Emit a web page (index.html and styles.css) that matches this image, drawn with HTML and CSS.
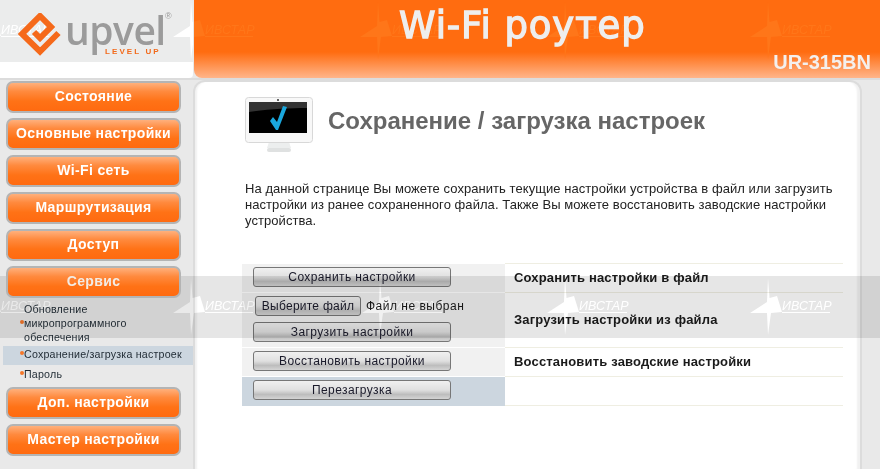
FILE: index.html
```html
<!DOCTYPE html>
<html lang="ru">
<head>
<meta charset="utf-8">
<title>Сохранение / загрузка настроек</title>
<link rel="stylesheet" href="styles.css">
</head>
<body>
<svg width="0" height="0" class="defs">
  <defs>
    <g id="wm">
      <polygon points="0,0 1.5,20 9,18 14,34 3,35 0,57 -1,35 -18,35 -1,24"/>
      <rect x="14" y="34" width="48" height="1"/>
      <text x="14" y="32" class="wm-text">ИВСТАР</text>
    </g>
  </defs>
</svg>
<div class="page">
  <header class="top">
    <div class="logo">
      <svg class="wm wm-white" width="193" height="62"><use href="#wm" x="-13" y="2"/><use href="#wm" x="191" y="2"/></svg>
      <svg class="mark" width="46" height="46" viewBox="0 0 46 46">
        <polyline points="40.5,20 22,38.5 4,21 22,3 33,14 22,25 16,19" fill="none" stroke="#f5691a" stroke-width="6"/>
      </svg>
      <div class="word">upvel</div>
      <div class="reg">®</div>
      <div class="tag">LEVEL UP</div>
    </div>
    <div class="band-top">
      <svg class="wm wm-orange" width="686" height="78"><use href="#wm" x="-3" y="2"/><use href="#wm" x="184" y="2"/><use href="#wm" x="371" y="2"/><use href="#wm" x="574" y="2"/></svg>
      <h1 class="product">Wi-Fi роутер</h1>
      <div class="model">UR-315BN</div>
    </div>
  </header>
  <div class="layout">
    <nav class="side">
      <a class="nav-btn">Состояние</a>
      <a class="nav-btn">Основные настройки</a>
      <a class="nav-btn">Wi-Fi сеть</a>
      <a class="nav-btn">Маршрутизация</a>
      <a class="nav-btn">Доступ</a>
      <a class="nav-btn nav-on">Сервис</a>
      <ul class="sub">
        <li class="sub-item sub-multi">Обновление микропрограммного обеспечения</li>
        <li class="sub-item sub-on">Сохранение/загрузка настроек</li>
        <li class="sub-item sub-last">Пароль</li>
      </ul>
      <a class="nav-btn">Доп. настройки</a>
      <a class="nav-btn">Мастер настройки</a>
    </nav>
    <main class="panel">
      <div class="head">
        <svg class="monitor" width="68" height="56" viewBox="0 0 68 56">
          <path d="M24 45h20l2 6H22z" fill="#eceeee"/>
          <rect x="22" y="51" width="24" height="4" rx="2" fill="#dfe1e1"/>
          <rect x="0.5" y="0.5" width="67" height="45" rx="3" fill="#f8f8f8" stroke="#d8d8d8"/>
          <rect x="4" y="5" width="58" height="31" fill="#000"/>
          <path d="M4 5h58v6c-18 0-40 1-58 4z" fill="#333"/>
          <circle cx="33" cy="3" r="1" fill="#333"/>
          <polygon points="25,24 28,20 32,25 38,9 42,10 33,33 31,33" fill="#1aa7dd"/>
        </svg>
        <h2 class="title">Сохранение / загрузка настроек</h2>
      </div>
      <p class="intro">На данной странице Вы можете сохранить текущие настройки устройства в файл или загрузить настройки из ранее сохраненного файла. Также Вы можете восстановить заводские настройки устройства.</p>
      <table class="grid">
        <tr>
          <td class="act"><button class="btn">Сохранить настройки</button></td>
          <td class="lbl">Сохранить настройки в файл</td>
        </tr>
        <tr>
          <td class="act act-file">
            <div class="file"><button class="btn-file">Выберите файл</button><span class="file-name">Файл не выбран</span></div>
            <button class="btn">Загрузить настройки</button>
          </td>
          <td class="lbl">Загрузить настройки из файла</td>
        </tr>
        <tr>
          <td class="act"><button class="btn">Восстановить настройки</button></td>
          <td class="lbl">Восстановить заводские настройки</td>
        </tr>
        <tr>
          <td class="act act-blue"><button class="btn">Перезагрузка</button></td>
          <td class="lbl"></td>
        </tr>
      </table>
    </main>
  </div>
  <div class="stripe">
    <svg class="wm wm-band" width="880" height="62"><use href="#wm" x="-13" y="2"/><use href="#wm" x="191" y="2"/><use href="#wm" x="380" y="2"/><use href="#wm" x="565" y="2"/><use href="#wm" x="768" y="2"/></svg>
  </div>
</div>
</body>
</html>
```
FILE: styles.css
```css
* { box-sizing: border-box; }
html, body { margin: 0; padding: 0; }
body { font-family: "Liberation Sans", Arial, sans-serif; background: #e9e9e9; color: #1a1a1a; }
.defs { position: absolute; }
.page { position: relative; width: 880px; height: 469px; overflow: hidden; }

.top { display: flex; height: 78px; }
.logo { position: relative; width: 193px; height: 78px; background: linear-gradient(#ebecec 0, #ebecec 62px, #fff 62px, #fff 100%); border-top-right-radius: 4px; border-bottom-right-radius: 4px; }
.band-top { position: relative; flex: 1; background: linear-gradient(#ff6c10 0, #ff6c10 52px, #ffb58a 78px); border-bottom-left-radius: 8px; margin-left: 1px; }
.wm { position: absolute; left: 0; top: 0; display: block; }
.wm-text { font: italic 12.5px "Liberation Sans", sans-serif; }
.wm-white { fill: #fff; }
.wm-orange { fill: #ff7619; }
.mark { position: absolute; left: 18px; top: 13px; }
.word { position: absolute; left: 65px; top: 14px; font: 600 39px/32px "Open Sans", sans-serif; color: #9b9b9b; letter-spacing: -0.5px; }
.reg { position: absolute; left: 165px; top: 12px; font-size: 9px; line-height: 9px; color: #9b9b9b; }
.tag { position: absolute; left: 105px; top: 47px; font: bold 8px/10px "Liberation Sans", sans-serif; color: #f26a1b; letter-spacing: 2.1px; }
.product { position: absolute; left: 205px; top: 2px; margin: 0; font: normal 37px/48px "DejaVu Sans", sans-serif; letter-spacing: 0.9px; -webkit-text-stroke: 1.3px #eeeeee; color: #eeeeee; white-space: nowrap; }
.model { position: absolute; right: 9px; top: 51px; font: bold 20px/22px "Liberation Sans", sans-serif; color: #f4f0ee; }

.layout { display: flex; height: 391px; border-top: 2px solid #dcdcdc; }
.side { width: 193px; padding: 1px 12px 0 6px; display: flex; flex-direction: column; gap: 5px; }
.nav-btn { display: block; flex: none; height: 32px; border: 2px solid #b4b4b4; border-radius: 7px; background: linear-gradient(#ffb07c 0, #ff8a3e 30%, #ff7216 65%, #ff6a10 100%); color: #fff; font: bold 14px/26px "Liberation Sans", sans-serif; letter-spacing: 0.35px; text-align: center; white-space: nowrap; }
.nav-on { position: relative; z-index: 2; color: #f3ebe4; }
.sub { list-style: none; flex: none; margin: -1px -12px 0 -3px; padding: 0; font-size: 10.67px; line-height: 14px; letter-spacing: 0.2px; color: #1f2a33; }
.sub-item { position: relative; padding-left: 21px; }
.sub-item::before { content: ""; position: absolute; left: 17px; top: 5px; width: 4px; height: 4px; border-radius: 50%; background: #f5772a; }
.sub-multi { height: 42px; padding-right: 40px; margin-bottom: 2px; }
.sub-multi::before { top: 18px; }
.sub-on { height: 19px; background: #ccd6df; padding-top: 1px; margin-bottom: 1px; }
.sub-last { height: 16px; padding-top: 1px; }

.panel { width: 669px; border: 2px solid #dcdcdc; border-bottom: 0; border-radius: 12px 12px 0 0; background: #fff; box-shadow: inset 3px 0 2px -1px #f1f1f1, inset -4px 0 2px -1px #f1f1f1; padding: 15px 16px 0 50px; }
.head { display: flex; align-items: center; gap: 15px; height: 56px; }
.monitor { flex: none; }
.title { margin: 0 0 8px; font: bold 24px/28px "Liberation Sans", sans-serif; color: #666; }
.intro { margin: 28px 0 0 0; width: 600px; font-size: 13px; line-height: 16px; letter-spacing: 0.06px; color: #222; }
.grid { margin: 34px 0 0 -3px; width: 601px; border-collapse: collapse; table-layout: fixed; }
.grid td { padding: 0; }
.grid .act { width: 263px; height: 29px; background: #f1f1f1; border-top: 1px solid #fff; padding-top: 3px; vertical-align: top; }
.grid .act-blue { background: #ccd6df; }
.grid .act-file { height: 55px; }
.grid .lbl { border-top: 1px solid #efeee2; border-bottom: 1px solid #efeee2; padding-left: 9px; font: bold 13px/16px "Liberation Sans", sans-serif; letter-spacing: 0.17px; color: #1a1a1a; }
.btn { display: block; width: 198px; height: 20px; margin: 0 0 0 11px; padding: 0; border: 1px solid #777; border-radius: 3px; background: linear-gradient(#f0f0f0 0, #e0e0e0 50%, #bdbdbd 75%, #d4d4d4 100%); font: 12px/18px "Liberation Sans", sans-serif; letter-spacing: 0.4px; color: #1a1a2a; }
.file { display: flex; align-items: center; margin: 0 0 6px 13px; }
.btn-file { width: 106px; height: 20px; padding: 0; border: 1px solid #777; border-radius: 3px; background: linear-gradient(#f0f0f0 0, #e0e0e0 50%, #c4c4c4 75%, #d4d4d4 100%); font: 12px/18px "Liberation Sans", sans-serif; letter-spacing: 0.25px; color: #1a1a2a; }
.file-name { margin-left: 5px; font-size: 12px; letter-spacing: 0.5px; }

.stripe { position: absolute; left: 0; top: 276px; width: 880px; height: 62px; background: #e6e6e6; mix-blend-mode: multiply; pointer-events: none; }
.wm-band { fill: #fff; }
```
